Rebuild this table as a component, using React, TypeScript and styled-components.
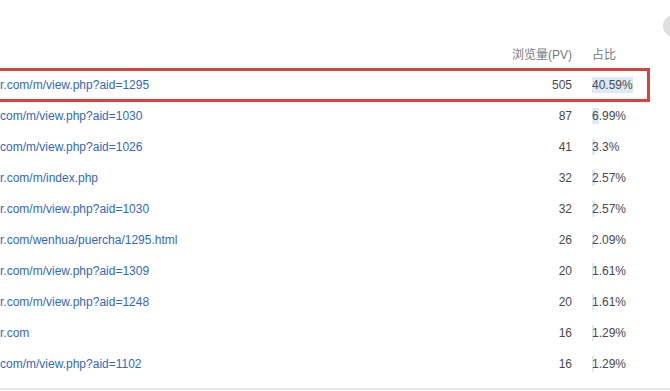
import styled, { createGlobalStyle } from "styled-components";

const GlobalStyle = createGlobalStyle`
  html, body {
    margin: 0;
    padding: 0;
    background: #fff;
    overflow: hidden;
  }
  body {
    font-family: "Liberation Sans", Arial, "Noto Sans CJK SC", sans-serif;
  }
`;

const Page = styled.div`
  position: relative;
  width: 670px;
  height: 391px;
  padding-top: 40px;
  box-sizing: border-box;
  overflow: hidden;
`;

const Knob = styled.div`
  position: absolute;
  top: 15px;
  left: 663px;
  width: 22px;
  height: 22px;
  border-radius: 50%;
  background: #dedede;
`;

const Table = styled.div`
  display: grid;
  grid-template-columns: 472px 80px 78px;
  column-gap: 20px;
  font-size: 12px;
`;

const Row = styled.div`
  display: contents;
`;

const Cell = styled.div<{ $align?: "left" | "right"; $header?: boolean }>`
  height: ${(p) => (p.$header ? 30 : 31)}px;
  line-height: ${(p) => (p.$header ? 30 : 31)}px;
  text-align: ${(p) => p.$align ?? "left"};
  color: ${(p) => (p.$header ? "#7a7a7a" : "#4a4a4a")};
  white-space: nowrap;
  position: relative;
`;

const Link = styled.a`
  color: #3468b8;
  text-decoration: none;
`;

const Pct = styled.span`
  position: relative;
  display: inline-block;
  line-height: 16px;
`;

const Bar = styled.span`
  position: absolute;
  left: 0;
  top: 0;
  bottom: 0;
  background: #dce9f7;
  z-index: 0;
`;

const PctText = styled.span`
  position: relative;
  z-index: 1;
`;

const Highlight = styled.div`
  position: absolute;
  top: -2px;
  bottom: -1px;
  left: -10px;
  width: 660px;
  border: 3px solid #d6433e;
  box-sizing: border-box;
  pointer-events: none;
`;

const Footer = styled.div`
  margin-top: 8px;
  height: 2px;
  background: #e8e8e8;
`;

const rows = [
  { url: "r.com/m/view.php?aid=1295", pv: 505, pct: 40.59 },
  { url: "com/m/view.php?aid=1030", pv: 87, pct: 6.99 },
  { url: "com/m/view.php?aid=1026", pv: 41, pct: 3.3 },
  { url: "r.com/m/index.php", pv: 32, pct: 2.57 },
  { url: "r.com/m/view.php?aid=1030", pv: 32, pct: 2.57 },
  { url: "r.com/wenhua/puercha/1295.html", pv: 26, pct: 2.09 },
  { url: "r.com/m/view.php?aid=1309", pv: 20, pct: 1.61 },
  { url: "r.com/m/view.php?aid=1248", pv: 20, pct: 1.61 },
  { url: "r.com", pv: 16, pct: 1.29 },
  { url: "com/m/view.php?aid=1102", pv: 16, pct: 1.29 },
];

export default function App() {
  return (
    <Page>
      <GlobalStyle />
      <Knob />
      <Table>
        <Row>
          <Cell $header />
          <Cell $header $align="right">浏览量(PV)</Cell>
          <Cell $header>占比</Cell>
        </Row>
        {rows.map((r, i) => (
          <Row key={i}>
            <Cell>
              {i === 0 && <Highlight />}
              <Link href="#">{r.url}</Link>
            </Cell>
            <Cell $align="right">{r.pv}</Cell>
            <Cell>
              <Pct>
                <Bar style={{ width: Math.max(2, Math.round(r.pct)) + "px" }} />
                <PctText>{r.pct}%</PctText>
              </Pct>
            </Cell>
          </Row>
        ))}
      </Table>
      <Footer />
    </Page>
  );
}
